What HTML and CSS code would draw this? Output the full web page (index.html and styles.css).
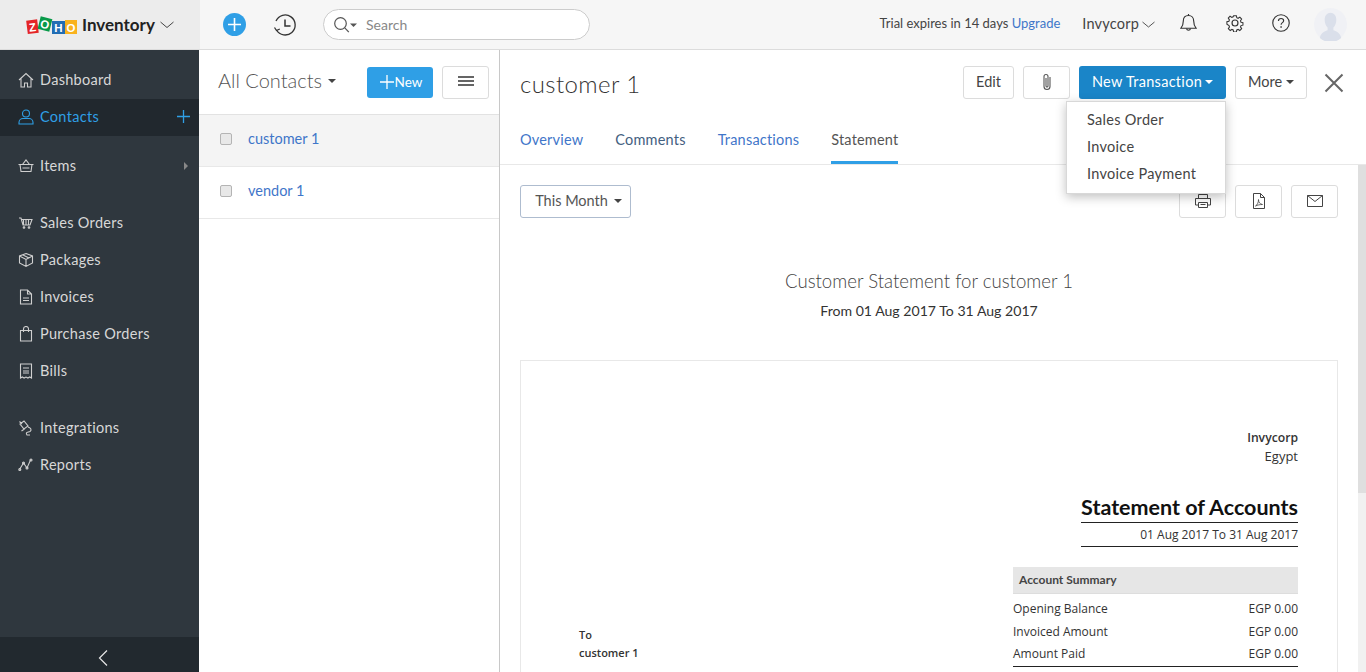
FILE: index.html
```html
<!DOCTYPE html>
<html lang="en">
<head>
<meta charset="utf-8">
<title>Zoho Inventory</title>
<link rel="stylesheet" href="styles.css">
</head>
<body>
<header class="topbar">
  <div class="brand">
    <svg class="zoho" width="53" height="20" viewBox="0 0 53 20">
      <g transform="rotate(-7 7 12)"><rect x="2" y="5" width="11" height="13.500" fill="#e42527"/><text x="7.500" y="16.500" class="ztxt">Z</text></g>
      <g transform="rotate(14 20 9)"><rect x="14" y="2.500" width="12" height="13" fill="#089949"/><text x="20" y="13.500" class="ztxt">O</text></g>
      <rect x="27" y="6" width="13" height="13" fill="#226db4"/><text x="33.500" y="17" class="ztxt">H</text>
      <rect x="40" y="5" width="12" height="14" fill="#f9b21d"/><text x="46" y="16.500" class="ztxt">O</text>
    </svg>
    <span class="brand-name">Inventory</span>
    <svg class="chev" width="14" height="8" viewBox="0 0 14 8"><path d="M.5 1 7 6.500 13.500 1" fill="none" stroke="#444"/></svg>
  </div>
  <div class="bar">
    <span class="plus-circle"><svg width="13" height="13" viewBox="0 0 13 13"><path d="M6.500 0v13M0 6.500h13" stroke="#fff" stroke-width="1.600"/></svg></span>
    <svg class="history" width="24" height="24" viewBox="0 0 24 24" fill="none" stroke="#333" stroke-width="1.300"><path d="M3.500 17A10 10 0 1 0 3 8"/><path d="M12 6.500V13h5.500" stroke-width="1.500"/><path d="M1.500 14.500 3.500 17.500 6.800 16"/></svg>
    <div class="search">
      <svg width="26" height="18" viewBox="0 0 26 18" fill="none" stroke="#555" stroke-width="1.200"><circle cx="7.500" cy="7.500" r="5.800"/><path d="m11.800 11.800 4 4.400"/><path d="M17 7.500h7l-3.500 3.500z" fill="#555" stroke="none"/></svg>
      <span>Search</span>
    </div>
    <div class="bar-right">
      <span class="trial">Trial expires in 14 days <a class="link">Upgrade</a></span>
      <span class="org">Invycorp</span>
      <svg class="org-chev" width="13" height="7" viewBox="0 0 13 7"><path d="M.5 1 6.500 6 12.500 1" fill="none" stroke="#555"/></svg>
      <svg class="bell ticon" width="17" height="20" viewBox="0 0 18 21" fill="none" stroke="#333" stroke-width="1.200"><path d="M9 2.500c-3.500 0-5.500 2.500-5.500 6 0 3.500-.8 5.500-2.500 7.500h16c-1.700-2-2.500-4-2.500-7.500 0-3.500-2-6-5.500-6z"/><path d="M9 1v1.500M6.800 16.500a2.300 2.300 0 0 0 4.400 0"/></svg>
      <svg class="gear ticon" width="18" height="18" viewBox="0 0 20 20" fill="none" stroke="#333" stroke-width="1.300"><path d="M8.300 1h3.400l.5 2.500 1.600.7 2.200-1.400 2.200 2.400-1.400 2.100.6 1.700 2.400.5v3.200l-2.400.5-.6 1.600 1.400 2.200-2.300 2.300-2.100-1.400-1.600.7-.5 2.400H8.300l-.5-2.400-1.600-.7-2.100 1.400-2.300-2.300 1.400-2.200-.6-1.600L0 11.500V8.300l2.500-.5.600-1.700L1.700 4l2.200-2.400 2.200 1.400 1.600-.7z" transform="translate(1 1) scale(.9)"/><circle cx="10" cy="10" r="3.300"/></svg>
      <svg class="help ticon" width="18" height="18" viewBox="0 0 19 19" fill="none" stroke="#333" stroke-width="1.200"><circle cx="9.500" cy="9.500" r="8.700"/><path d="M6.800 7.300c0-1.600 1.200-2.600 2.800-2.600 1.500 0 2.700 1 2.700 2.400 0 2-2.700 2-2.700 4.200"/><path d="M9.600 13v1.500" stroke-width="1.500"/></svg>
      <svg class="avatar" width="33" height="33" viewBox="0 0 34 34"><circle cx="17" cy="17" r="17" fill="#f0f1f5"/><path d="M6 31c1-6 6-7 8-8v-3c-2-2-3-5-3-8 0-4 2.500-7 6-7s6 3 6 7c0 3-1 6-3 8v3c2 1 7 2 8 8a17 17 0 0 1-22 0z" fill="#dadfea"/></svg>
    </div>
  </div>
</header>

<div class="main">
  <nav class="sidebar">
    <div class="nav">
      <a class="nav-item"><svg class="ni" viewBox="0 0 16 16"><path d="M1 8 8 1.500 15 8M3 6.500V15h3.500v-4h3v4H13V6.500"/></svg>Dashboard</a>
      <a class="nav-item active"><svg class="ni" viewBox="0 0 16 16"><circle cx="8" cy="4.500" r="3.500"/><path d="M1 15v-1.500C1 11 3 9.500 5 9.500h6c2 0 4 1.500 4 4V15z"/></svg>Contacts<svg class="nav-plus" width="13" height="13" viewBox="0 0 13 13"><path d="M6.500 0v13M0 6.500h13" stroke="#2f9fe6" stroke-width="1.300"/></svg></a>
      <a class="nav-item gap-s"><svg class="ni" viewBox="0 0 16 16"><path d="M.5 6.500h15M2 6.500l1 7h10l1-7M4.500 6.500 8 2l3.500 4.500M4.500 10h7"/></svg>Items<i class="nav-arrow"></i></a>
      <a class="nav-item gap-l"><svg class="ni" viewBox="0 0 16 16"><path d="M1 3h2l2 7h7l2-5.500H3.500M5.500 5v5M8 5v5M10.500 5v5"/><circle cx="6" cy="12.500" r=".8"/><circle cx="11" cy="12.500" r=".8"/></svg>Sales Orders</a>
      <a class="nav-item"><svg class="ni" viewBox="0 0 16 16"><path d="M8 1.500 14.500 4v7L8 14.500 1.500 11V4zM1.500 4 8 7.500l6.500-3.500M8 7.500v7M4.500 2.800 11 6"/></svg>Packages</a>
      <a class="nav-item"><svg class="ni" viewBox="0 0 16 16"><path d="M2.500 1h7l4 4v10h-11zM9.500 1v4h4M5 9h6M5 11.500h6"/></svg>Invoices</a>
      <a class="nav-item"><svg class="ni" viewBox="0 0 16 16"><path d="M2.500 4.500h11V15h-11zM5.500 6V3a2.500 2.500 0 0 1 5 0v3"/></svg>Purchase Orders</a>
      <a class="nav-item"><svg class="ni" viewBox="0 0 16 16"><path d="M2.500 1h11v14l-1.800-1-1.800 1-1.900-1-1.900 1-1.800-1-1.800 1zM5 5h6M5 8h6M5 10h6"/></svg>Bills</a>
      <a class="nav-item gap-l"><svg class="ni" viewBox="0 0 16 16"><path d="M2 4l4-3 4 5-4 3zM1.500 1.500 4 4M6.500 9l-3 2M10 7c3 1 4 3 2 4.500-2 1-5 .5-3 3.500h3"/></svg>Integrations</a>
      <a class="nav-item"><svg class="ni" viewBox="0 0 16 16"><path d="M1.500 12.500 5.500 6l3.500 5 3.500-8"/><circle cx="1.800" cy="12.500" r="1"/><circle cx="5.500" cy="6" r="1"/><circle cx="9" cy="11" r="1"/><circle cx="13" cy="3" r="1"/></svg>Reports</a>
    </div>
    <div class="collapse"><svg width="10" height="16" viewBox="0 0 10 16"><path d="M9 .5 1.500 8 9 15.500" fill="none" stroke="#e6e6e6" stroke-width="1.200"/></svg></div>
  </nav>

  <section class="list">
    <div class="list-head">
      <span class="list-title">All Contacts</span><i class="caret dark list-caret"></i>
      <button class="btn-new"><svg width="14" height="14" viewBox="0 0 14 14"><path d="M7 0v14M0 7h14" stroke="#fff" stroke-width="1.300"/></svg>New</button>
      <button class="btn btn-menu"><svg width="16" height="10" viewBox="0 0 16 10"><path d="M0 1h16M0 5h16M0 9h16" stroke="#333" stroke-width="1.400"/></svg></button>
    </div>
    <div class="row selected"><i class="check"></i><a class="link">customer 1</a></div>
    <div class="row"><i class="check"></i><a class="link">vendor 1</a></div>
  </section>

  <section class="detail">
    <div class="detail-head">
      <div class="title-row">
        <h1 class="title">customer 1</h1>
        <div class="actions">
          <button class="btn btn-edit">Edit</button>
          <button class="btn btn-clip"><svg width="10" height="18" viewBox="0 0 10 18" fill="none" stroke="#555" stroke-width="1.100"><path d="M8 4v9.500a3 3 0 0 1-6 0V3.500a2 2 0 0 1 4 0V13a.9.900 0 0 1-2 0V5"/></svg></button>
          <button class="btn-primary">New Transaction<i class="caret light"></i></button>
          <button class="btn btn-more">More<i class="caret dark"></i></button>
          <svg class="close" width="20" height="20" viewBox="0 0 20 20"><path d="M1.500 1.500l17 17M18.500 1.500l-17 17" stroke="#666" stroke-width="2"/></svg>
        </div>
      </div>
      <div class="tabs">
        <a class="tab">Overview</a>
        <a class="tab plain">Comments</a>
        <a class="tab">Transactions</a>
        <a class="tab on">Statement</a>
      </div>
    </div>
    <div class="dropdown">
      <a class="dd-item">Sales Order</a>
      <a class="dd-item">Invoice</a>
      <a class="dd-item">Invoice Payment</a>
    </div>
    <div class="body">
      <div class="scroll">
        <div class="tools">
          <button class="btn-period">This Month<i class="caret dark"></i></button>
          <div class="tool-icons">
            <button class="btn btn-tool"><svg width="16" height="16" viewBox="0 0 16 16" fill="none" stroke="#444"><path d="M3.500 5V1.500h9V5M3 12H.5V5.500h15V12H13"/><path d="M3.500 9.500h9v5h-9zM5.500 11.500h5"/></svg></button>
            <button class="btn btn-tool"><svg width="14" height="16" viewBox="0 0 14 16" fill="none" stroke="#444"><path d="M1.500.5h7l4 4v11h-11zM8.500.5v4h4"/><path d="M3.500 13c2-1 3-4 3-6.500 0 3 1.500 4.500 4 5-2.500 0-5 .500-7 1.500z" stroke-width=".8"/></svg></button>
            <button class="btn btn-tool"><svg width="16" height="12" viewBox="0 0 16 12" fill="none" stroke="#444"><path d="M.5.500h15v11H.5zM.5.500 8 6.500l7.500-6"/></svg></button>
          </div>
        </div>
        <h2 class="st-title">Customer Statement for customer 1</h2>
        <p class="st-range">From 01 Aug 2017 To 31 Aug 2017</p>
        <div class="sheet">
          <div class="to">
            <div>To</div>
            <div class="to-name">customer 1</div>
          </div>
          <div class="sheet-right">
            <div class="org-name">Invycorp</div>
            <div class="org-country">Egypt</div>
            <div class="accounts">
              <div class="acc-title">Statement of Accounts</div>
              <div class="acc-range">01 Aug 2017 To 31 Aug 2017</div>
            </div>
            <div class="summary-head">Account Summary</div>
            <div class="summary-row"><span>Opening Balance</span><span>EGP 0.00</span></div>
            <div class="summary-row"><span>Invoiced Amount</span><span>EGP 0.00</span></div>
            <div class="summary-row last"><span>Amount Paid</span><span>EGP 0.00</span></div>
          </div>
        </div>
      </div>
      <div class="scrollbar"><div class="thumb"></div></div>
    </div>
  </section>
</div>
</body>
</html>
```
FILE: styles.css
```css
* { box-sizing: border-box; }
html, body { height: 100%; }
body {
  margin: 0;
  height: 672px;
  overflow: hidden;
  display: flex;
  flex-direction: column;
  font-family: "Lato", "Open Sans", sans-serif;
  font-size: 14px;
  color: #444;
  background: #fff;
}
button { font-family: inherit; cursor: pointer; }
h1, h2, p { margin: 0; font-weight: 400; }
.link { color: #3f76c9; }

/* top bar */
.topbar { height: 50px; flex: none; display: flex; background: #f6f6f6; border-bottom: 1px solid #dcdcdc; }
.brand { width: 200px; flex: none; display: flex; align-items: center; padding-left: 25px; background: #ececec; }
.zoho { flex: none; }
.ztxt { font: 700 11.500px "Liberation Sans", sans-serif; fill: #fff; text-anchor: middle; }
.brand-name { margin-left: 4px; font-size: 17px; font-weight: 700; color: #222; }
.chev { margin-left: 5px; }
.bar { flex: 1; display: flex; align-items: center; padding-left: 23px; }
.plus-circle { width: 23px; height: 23px; border-radius: 50%; background: #2f9fe6; display: flex; align-items: center; justify-content: center; }
.history { margin-left: 27px; }
.search { margin-left: 26px; width: 267px; height: 31px; border: 1px solid #ccc; border-radius: 16px; background: #fff; display: flex; align-items: center; padding-left: 9px; color: #888; }
.search span { margin-left: 7px; }
.bar-right { margin-left: auto; display: flex; align-items: center; padding-right: 19px; }
.trial { font-size: 13px; color: #444; padding-bottom: 4px; }
.org { margin-left: 22px; font-size: 14.500px; letter-spacing: .2px; color: #444; padding-bottom: 2px; }
.org-chev { margin-left: 3px; }
.ticon { margin-bottom: 4px; }
.bell { margin-left: 25px; }
.gear { margin-left: 29px; }
.help { margin-left: 28px; }
.avatar { margin-left: 24px; }

/* layout */
.main { flex: 1; min-height: 0; display: flex; }

/* sidebar */
.sidebar { width: 199px; flex: none; background: #2f373e; display: flex; flex-direction: column; }
.nav { flex: 1; padding-top: 12px; }
.nav-item { height: 37px; display: flex; align-items: center; padding: 0 0 2px 18px; color: #d8d8d8; font-size: 14.500px; letter-spacing: .3px; position: relative; }
.nav-item.active { background: #21282e; color: #2f9fe6; }
.nav-item.active .ni { stroke: #2f9fe6; }
.gap-s { margin-top: 12px; }
.gap-l { margin-top: 20px; }
.ni { width: 16px; height: 16px; margin-right: 6px; flex: none; fill: none; stroke: #cfcfcf; stroke-width: 1.100; }
.nav-plus { margin-left: auto; margin-right: 9px; }
.nav-arrow { margin-left: auto; margin-right: 11px; border-left: 4px solid #888; border-top: 4px solid transparent; border-bottom: 4px solid transparent; }
.collapse { height: 35px; flex: none; background: #22292f; display: flex; align-items: center; justify-content: center; padding: 6px 0 0 6px; }

/* contact list */
.list { width: 301px; flex: none; border-right: 1px solid #c8c8c8; }
.list-head { height: 65px; display: flex; align-items: center; padding: 0 10px 0 19px; border-bottom: 1px solid #e2e2e2; }
.list-title { font-size: 20px; font-weight: 300; color: #555; padding-bottom: 5px; }
.list-caret { margin: 0 0 3px 6px; }
.caret { display: inline-block; border-left: 4px solid transparent; border-right: 4px solid transparent; border-top: 4px solid #555; }
.caret.light { border-top-color: #fff; margin-left: 3px; }
.caret.dark { border-top-color: #444; }
.btn-new { margin-left: auto; width: 66px; height: 31px; border: 0; border-radius: 3px; background: #2f9fe6; color: #fff; font-size: 13.500px; display: flex; align-items: center; justify-content: center; padding: 0 0 0 2px; gap: 1px; }
.btn { background: #fff; border: 1px solid #dcdcdc; border-radius: 3px; height: 33px; padding: 0 0 2px; color: #444; font-size: 14.500px; display: flex; align-items: center; justify-content: center; }
.btn-menu { margin-left: 9px; width: 47px; }
.row { height: 52px; display: flex; align-items: center; padding: 0 0 4px 21px; border-bottom: 1px solid #e8e8e8; font-size: 14.500px; }
.row.selected { background: #f4f4f4; }
.check { width: 12px; height: 12px; margin-right: 16px; border: 1px solid #b4b4b4; border-radius: 2px; background: #e8e8e8; }

/* detail */
.detail { flex: 1; min-width: 0; display: flex; flex-direction: column; position: relative; }
.detail-head { height: 115px; flex: none; border-bottom: 1px solid #e8e8e8; padding: 16px 0 0 20px; display: flex; flex-direction: column; }
.title-row { display: flex; align-items: center; height: 33px; }
.title { font-size: 24px; font-weight: 300; letter-spacing: .4px; color: #333; padding-top: 2px; }
.actions { margin-left: auto; display: flex; align-items: center; padding-right: 22px; }
.btn-edit { width: 51px; }
.btn-clip { width: 47px; margin-left: 9px; }
.btn-primary { width: 147px; height: 33px; margin-left: 9px; border: 0; border-radius: 3px; background: #1a85c8; color: #fff; font-size: 14.500px; letter-spacing: .3px; padding: 0 0 2px; display: flex; align-items: center; justify-content: center; }
.btn-more { width: 72px; margin-left: 9px; gap: 4px; }
.close { margin-left: 17px; }
.tabs { margin-top: auto; display: flex; gap: 32px; }
.tab { height: 33px; padding-top: 0; font-size: 14.500px; letter-spacing: .2px; color: #3f76c9; }
.tab.plain { color: #44607f; }
.tab.on { color: #555; border-bottom: 3px solid #2f9fe6; }

.dropdown { position: absolute; z-index: 5; top: 51px; left: 566px; width: 160px; height: 93px; padding-top: 4px; background: #fff; border: 1px solid #d8d8d8; box-shadow: 0 3px 10px rgba(0,0,0,.25); }
.dd-item { display: block; height: 27px; line-height: 27px; padding-left: 20px; font-size: 14.500px; letter-spacing: .3px; color: #444; }

.body { flex: 1; min-height: 0; display: flex; }
.scroll { flex: 1; min-width: 0; padding: 20px 20px 0; overflow: hidden; }
.scrollbar { width: 8px; flex: none; background: #f1f1f1; }
.thumb { height: 328px; background: #dfdfdf; }
.tools { display: flex; justify-content: space-between; align-items: flex-start; }
.btn-period { width: 111px; height: 33px; background: #fff; border: 1px solid #aebccf; border-radius: 3px; color: #555; font-size: 14.500px; padding: 0 0 2px 6px; display: flex; align-items: center; justify-content: center; gap: 6px; }
.tool-icons { display: flex; gap: 9px; }
.btn-tool { width: 47px; }
.st-title { margin-top: 52px; text-align: center; font-size: 18.600px; font-weight: 300; color: #444; line-height: 22px; }
.st-range { margin-top: 9px; text-align: center; font-size: 14.100px; color: #333; line-height: 20px; }
.sheet { margin-top: 39px; height: 400px; border: 1px solid #e8e8e8; display: flex; font-family: "Open Sans", sans-serif; font-size: 12px; color: #333; }
.to { width: 492px; flex: none; padding: 265px 0 0 58px; font-size: 11px; font-weight: 600; line-height: 18px; }
.sheet-right { width: 285px; padding-top: 67px; }
.org-name, .org-country { text-align: right; line-height: 19px; }
.org-name { font-weight: 600; font-size: 12.200px; }
.org-country { font-size: 13px; }
.accounts { margin: 28px 0 0 68px; }
.acc-title { font-family: "Lato", sans-serif; font-size: 21.500px; font-weight: 700; color: #111; line-height: 26px; padding-bottom: 2px; border-bottom: 1px solid #222; text-align: right; }
.acc-range { height: 24px; line-height: 23px; border-bottom: 1px solid #222; text-align: right; }
.summary-head { margin-top: 20px; height: 27px; line-height: 26px; padding-left: 6px; background: #e6e6e6; border-bottom: 1px solid #ddd; font-family: "Lato", sans-serif; font-weight: 700; font-size: 12px; color: #444; }
.summary-row { height: 23px; display: flex; justify-content: space-between; align-items: center; }
.summary-head + .summary-row { margin-top: 3px; }
.summary-row.last { border-bottom: 1px solid #222; height: 24px; padding-bottom: 3px; }
```
